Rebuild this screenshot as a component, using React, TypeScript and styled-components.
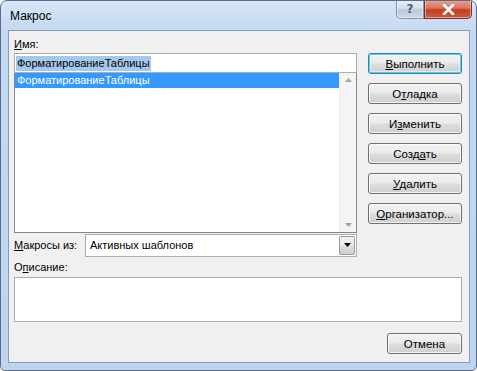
import React from "react";
import styled, { createGlobalStyle } from "styled-components";

const Global = createGlobalStyle`
  html, body { margin: 0; padding: 0; background: #ffffff; }
  body { font-family: "Liberation Sans", Arial, sans-serif; font-size: 11px; color: #000; }
  * { box-sizing: border-box; }
`;

const Window = styled.div`
  width: 477px;
  height: 371px;
  border: 1px solid #5b6d86;
  border-radius: 7px 7px 5px 5px;
  background: linear-gradient(180deg, #d6e6f8 0px, #c4d9f1 30px, #bed4ef 100%);
  padding: 0 6px 7px 7px;
  display: flex;
  flex-direction: column;
  overflow: hidden;
`;

const TitleBar = styled.div`
  height: 29px;
  display: flex;
  align-items: flex-start;
  justify-content: space-between;
`;

const Title = styled.div`
  margin-top: 8px;
  padding-left: 2px;
  font-size: 12px;
  color: #000;
`;

const Caption = styled.div`
  display: flex;
  margin-top: -1px;
  margin-right: -2px;
`;

const CapButton = styled.div<{ $close?: boolean }>`
  height: 19px;
  width: ${(p) => (p.$close ? 48 : 28)}px;
  display: flex;
  align-items: center;
  justify-content: center;
  border: 1px solid ${(p) => (p.$close ? "#7d2c2c" : "#8494aa")};
  border-top: none;
  border-radius: ${(p) => (p.$close ? "0 0 5px 0" : "0 0 0 5px")};
  background: ${(p) =>
    p.$close
      ? "linear-gradient(180deg, #e8a393 0%, #d8765f 45%, #c33d24 55%, #cf5a3a 100%)"
      : "linear-gradient(180deg, #e9eff7 0%, #d6e0ec 45%, #bccbdc 55%, #cbd8e7 100%)"};
  box-shadow: inset 0 0 0 1px rgba(255, 255, 255, 0.45);
  font-family: "DejaVu Sans", sans-serif;
  font-weight: bold;
  font-size: 12px;
  color: ${(p) => (p.$close ? "#fff" : "#4d5c70")};
`;

const Client = styled.div`
  flex: 1;
  border: 1px solid #8a9cb4;
  background: #f0f0f0;
  padding: 6px 7px 0 5px;
  display: flex;
  flex-direction: column;
`;

const TopGrid = styled.div`
  display: grid;
  grid-template-columns: 343px 94px;
  column-gap: 11px;
`;

const LeftCol = styled.div`
  display: flex;
  flex-direction: column;
`;

const Label = styled.div`
  height: 16px;
  line-height: 14px;
  white-space: nowrap;
`;

const U = styled.span`
  text-decoration: underline;
  text-underline-offset: 1px;
`;

const NameInput = styled.div`
  height: 20px;
  border: 1px solid #abadb3;
  background: #fff;
  padding: 2px 1px;
  display: flex;
  align-items: center;
`;

const Selected = styled.span`
  background: #a6c8ef;
  color: #000;
  padding: 0 1px;
  line-height: 15px;
`;

const ListBox = styled.div`
  height: 160px;
  border: 1px solid #828790;
  border-top: none;
  background: #fff;
  display: flex;
`;

const ListItems = styled.div`
  flex: 1;
`;

const ListRow = styled.div<{ $sel?: boolean }>`
  height: 15px;
  line-height: 15px;
  padding-left: 2px;
  background: ${(p) => (p.$sel ? "#3399ff" : "transparent")};
  color: ${(p) => (p.$sel ? "#fff" : "#000")};
`;

const ScrollBar = styled.div`
  width: 17px;
  background: #f4f4f4;
  border-left: 1px solid #ececec;
  display: flex;
  flex-direction: column;
  justify-content: space-between;
  align-items: center;
  padding: 5px 0;
`;

const Arrow = styled.svg`
  display: block;
`;

const ButtonCol = styled.div`
  padding-top: 16px;
  display: flex;
  flex-direction: column;
  gap: 9px;
`;

const Button = styled.div<{ $default?: boolean }>`
  height: 21px;
  width: 100%;
  border: 1px solid ${(p) => (p.$default ? "#3c7fb1" : "#707070")};
  border-radius: 3px;
  background: linear-gradient(180deg, #f2f2f2 0%, #ebebeb 48%, #dddddd 52%, #cfcfcf 100%);
  box-shadow: ${(p) =>
    p.$default
      ? "inset 0 0 0 1px #48d2f4, inset 0 0 0 2px rgba(255,255,255,0.5)"
      : "inset 0 0 0 1px rgba(255,255,255,0.75)"};
  display: flex;
  align-items: center;
  justify-content: center;
  white-space: nowrap;
  color: #000;
  font-size: 11.5px;
`;

const MacrosRow = styled.div`
  height: 24px;
  display: grid;
  grid-template-columns: 71px 272px;
  align-items: center;
`;

const Combo = styled.div`
  height: 23px;
  border: 1px solid #abadb3;
  background: #fff;
  display: flex;
  align-items: center;
  justify-content: space-between;
  padding: 0 1px 0 4px;
`;

const ComboButton = styled.div`
  width: 16px;
  height: 19px;
  border: 1px solid #9a9a9a;
  border-radius: 2px;
  background: linear-gradient(180deg, #f2f2f2 0%, #ebebeb 48%, #dddddd 52%, #cfcfcf 100%);
  display: flex;
  align-items: center;
  justify-content: center;
`;

const DescLabel = styled.div`
  height: 20px;
  line-height: 19px;
  padding-top: 1px;
`;

const DescBox = styled.div`
  height: 45px;
  width: 448px;
  border: 1px solid #abadb3;
  background: #fff;
`;

const Footer = styled.div`
  display: flex;
  justify-content: flex-end;
  width: 448px;
  margin-top: 11px;
`;

const CancelButton = styled(Button)`
  width: 75px;
`;

export default function App() {
  return (
    <>
      <Global />
      <Window>
        <TitleBar>
          <Title>Макрос</Title>
          <Caption>
            <CapButton>?</CapButton>
            <CapButton $close>
              <svg width="13" height="11" viewBox="0 0 13 11">
                <path d="M2 1 L11 10 M11 1 L2 10" stroke="#fff" strokeWidth="2.6" strokeLinecap="round" />
              </svg>
            </CapButton>
          </Caption>
        </TitleBar>
        <Client>
          <TopGrid>
            <LeftCol>
              <Label>
                <U>И</U>мя:
              </Label>
              <NameInput>
                <Selected>ФорматированиеТаблицы</Selected>
              </NameInput>
              <ListBox>
                <ListItems>
                  <ListRow $sel>ФорматированиеТаблицы</ListRow>
                </ListItems>
                <ScrollBar>
                  <Arrow width="7" height="4" viewBox="0 0 7 4">
                    <path d="M0 4 L3.5 0 L7 4 Z" fill="#a3a3a3" />
                  </Arrow>
                  <Arrow width="7" height="4" viewBox="0 0 7 4">
                    <path d="M0 0 L3.5 4 L7 0 Z" fill="#a3a3a3" />
                  </Arrow>
                </ScrollBar>
              </ListBox>
            </LeftCol>
            <ButtonCol>
              <Button $default>
                <span>
                  <U>В</U>ыполнить
                </span>
              </Button>
              <Button>
                <span>
                  О<U>т</U>ладка
                </span>
              </Button>
              <Button>
                <span>
                  И<U>з</U>менить
                </span>
              </Button>
              <Button>
                <span>
                  Созд<U>а</U>ть
                </span>
              </Button>
              <Button>
                <span>
                  <U>У</U>далить
                </span>
              </Button>
              <Button>
                <span>
                  <U>О</U>рганизатор...
                </span>
              </Button>
            </ButtonCol>
          </TopGrid>
          <MacrosRow>
            <span>
              <U>М</U>акросы из:
            </span>
            <Combo>
              <span>Активных шаблонов</span>
              <ComboButton>
                <svg width="7" height="4" viewBox="0 0 7 4">
                  <path d="M0 0 L3.5 4 L7 0 Z" fill="#000" />
                </svg>
              </ComboButton>
            </Combo>
          </MacrosRow>
          <DescLabel>
            О<U>п</U>исание:
          </DescLabel>
          <DescBox />
          <Footer>
            <CancelButton>Отмена</CancelButton>
          </Footer>
        </Client>
      </Window>
    </>
  );
}
